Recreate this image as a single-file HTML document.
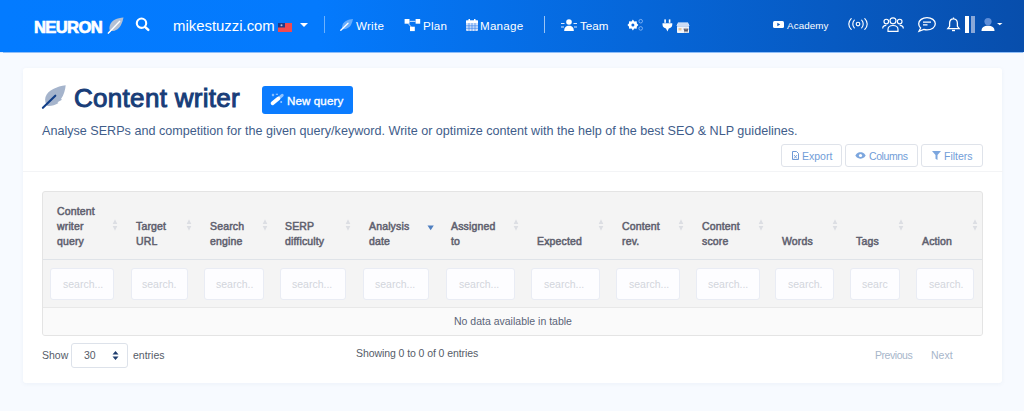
<!DOCTYPE html>
<html><head><meta charset="utf-8">
<style>
*{box-sizing:border-box;margin:0;padding:0}
html,body{width:1024px;height:411px;overflow:hidden;background:#f7faff;font-family:"Liberation Sans",sans-serif}
.a{position:absolute;white-space:nowrap;line-height:1}
svg{position:absolute;overflow:visible}
.nav{position:absolute;left:0;top:0;width:1024px;height:52px;box-shadow:0 0.8px 0.8px rgba(20,120,240,.45);background:linear-gradient(90deg,#037bff 0%,#047afd 31%,#0666d8 63%,#084eac 100%)}
.nt{color:#fff;font-size:11.6px;letter-spacing:0.25px}
.card{position:absolute;left:23px;top:68px;width:979px;height:315px;background:#fff;border-radius:3px;box-shadow:0 1px 4px rgba(30,70,140,.05)}
.sep{position:absolute;left:23px;top:171px;width:980px;height:1px;background:#f3f4f6}
.title{left:74px;top:85.3px;font-size:26px;font-weight:normal;color:#183d78;letter-spacing:0.3px;-webkit-text-stroke:1px #183d78}
.btn{position:absolute;left:262px;top:86px;width:91px;height:28px;background:#0b7cff;border-radius:3px}
.desc{left:42px;top:124.5px;font-size:12.6px;color:#3f5d8a}
.tbtn{position:absolute;top:144px;height:23px;border:1px solid #dfe3ea;border-radius:3px;background:#fff}
.tbt{color:#719dd8;font-size:10.5px;top:151px}
.tbl{position:absolute;left:42px;top:191px;width:941px;height:145.4px;border:1px solid #e4e4e4;border-radius:3px;background:#f4f4f4;overflow:hidden}
.hrow{position:absolute;left:0;top:67px;width:939px;height:1px;background:#dfe3e8}
.srow{position:absolute;left:0;top:114.6px;width:939px;height:28px;background:#fafafa;border-top:1px solid #e8e8e8}
.th{position:absolute;font-size:10.5px;font-weight:normal;color:#5e606e;line-height:15px;white-space:nowrap;letter-spacing:0.15px;-webkit-text-stroke:0.5px #5e606e}
.inp{position:absolute;top:268px;height:32px;background:#fdfdff;border:1px solid #e9ecf4;border-radius:3px}
.ph{color:#d2d5dc;font-size:10.5px;top:279px}
.sort{position:absolute;top:219px;width:6px;height:12px}
.ft{font-size:10.5px;color:#555c68}
</style></head><body>
<div class="nav"></div>

<!-- NEURON logo -->
<div class="a" style="left:34px;top:20px;font-size:16.6px;font-weight:bold;color:#fff;letter-spacing:-0.65px;-webkit-text-stroke:0.7px #fff">NEURON</div>
<svg style="left:107px;top:17px" width="17" height="17" viewBox="0 0 17 17"><path d="M16.5 0.5 C10 1 5 3 3 8 C2 11 2.5 13 3 13.5 L0.5 16.5 L1.5 16.8 L4 14 C8 14.5 12 12 14 8 C15.5 5 16 2.5 16.5 0.5Z" fill="#b3c0d4"/><path d="M1 16.5 L13 4" stroke="#fff" stroke-width="1.4"/></svg>
<!-- search -->
<svg style="left:135px;top:17px" width="15" height="14" viewBox="0 0 15 14"><circle cx="6.5" cy="6.2" r="4.7" fill="none" stroke="#fff" stroke-width="2.1"/><path d="M10 9.8 L13.3 12.9" stroke="#fff" stroke-width="2.5" stroke-linecap="round"/></svg>

<div class="a nt" style="left:173px;top:19px;font-size:14.9px;letter-spacing:0px">mikestuzzi.com</div>
<svg style="left:278px;top:23px" width="14" height="9" viewBox="0 0 14 9"><rect width="14" height="9" fill="#f04a4f"/><rect width="7" height="4.5" fill="#1e3a8a"/><circle cx="3.5" cy="2.2" r="1" fill="#fff" opacity=".7"/></svg>
<svg style="left:300px;top:22.6px" width="8" height="4" viewBox="0 0 8 4"><path d="M0 0H8L4 4Z" fill="#fff"/></svg>
<div style="position:absolute;left:323.5px;top:16px;width:1px;height:17px;background:rgba(255,255,255,.42)"></div>

<!-- Write -->
<svg style="left:340px;top:19px" width="13" height="12" viewBox="0 0 13 12"><path d="M13 0 C8 0.5 4 2 2.5 6 C1.8 8 2 9.5 2.3 10 L3 10.3 C6 10.6 9.5 8.5 11 6 C12 4 12.6 2 13 0Z" fill="rgba(220,235,255,.45)"/><path d="M0.8 11.3 L8 4.3" stroke="#fff" stroke-width="1.3" stroke-linecap="round"/></svg>
<div class="a nt" style="left:356px;top:20.3px">Write</div>
<!-- Plan sitemap -->
<svg style="left:404px;top:19px" width="17" height="13" viewBox="0 0 17 13"><rect x="0.6" y="0" width="4.9" height="4.7" fill="#fff"/><rect x="11.6" y="0" width="4.6" height="4.7" fill="#fff"/><rect x="6" y="7.7" width="4.8" height="4.4" fill="#fff"/><path d="M5.5 2.35H11.6M4.2 4.5L7.2 7.9" stroke="#cfe3ff" stroke-width="1" fill="none"/></svg>
<div class="a nt" style="left:423px;top:20.3px">Plan</div>
<!-- Manage calendar -->
<svg style="left:466px;top:19px" width="12" height="12" viewBox="0 0 12 12"><rect x="0" y="1.5" width="12" height="10.5" rx="1" fill="#cfe0fb"/><rect x="0" y="1.5" width="12" height="2.5" fill="#fff"/><rect x="2.5" y="0" width="1.5" height="2.5" fill="#fff"/><rect x="8" y="0" width="1.5" height="2.5" fill="#fff"/><path d="M0 6.8H12M0 9.3H12M3 4V12M6 4V12M9 4V12" stroke="#3d86ee" stroke-width="0.7"/></svg>
<div class="a nt" style="left:480px;top:20.3px">Manage</div>

<div style="position:absolute;left:544px;top:16px;width:1px;height:17px;background:rgba(255,255,255,.6)"></div>

<!-- Team -->
<svg style="left:561px;top:19px" width="16" height="12" viewBox="0 0 16 12"><circle cx="8" cy="3" r="2.8" fill="#fff"/><path d="M3.2 12 C3.2 8.2 5 6.8 8 6.8 C11 6.8 12.8 8.2 12.8 12Z" fill="#fff"/><path d="M0 4.5H3.5M12.5 4.5H16M0 8H3M13 8H16" stroke="#dbe8ff" stroke-width="1"/></svg>
<div class="a nt" style="left:580px;top:20.3px;letter-spacing:0px">Team</div>
<!-- gears -->
<svg style="left:627px;top:19px" width="16" height="12" viewBox="0 0 16 12"><path d="M5.9 0.6 L7.3 2.4 L9.6 2.3 L9.9 4.5 L11.4 6 L9.9 7.5 L9.6 9.7 L7.3 9.6 L5.9 11.4 L4.5 9.6 L2.2 9.7 L1.9 7.5 L0.4 6 L1.9 4.5 L2.2 2.3 L4.5 2.4Z" fill="#fff"/><circle cx="5.9" cy="6" r="3.2" fill="#fff"/><circle cx="5.9" cy="6" r="1.5" fill="#0a66dc"/><circle cx="13.7" cy="2.2" r="1.8" fill="none" stroke="rgba(170,205,255,.75)" stroke-width="0.9"/><circle cx="13.7" cy="9.4" r="1.8" fill="none" stroke="rgba(170,205,255,.75)" stroke-width="0.9"/></svg>
<!-- plug + store -->
<svg style="left:662px;top:18.5px" width="11" height="13" viewBox="0 0 11 13"><rect x="2.3" y="0.4" width="1.6" height="3.4" fill="#fff"/><rect x="6.8" y="0.4" width="1.6" height="3.4" fill="#fff"/><path d="M0.5 4.3H10.3V5.6 C10.3 8.2 8.5 9.2 6.8 9.5 L5.4 12.4 L4 9.5 C2.3 9.2 0.5 8.2 0.5 5.6Z" fill="#fff"/></svg>
<svg style="left:676px;top:22px" width="14" height="11" viewBox="0 0 14 11"><rect x="1" y="3.5" width="12" height="7.5" rx="0.8" fill="#f2f5fa"/><path d="M0.5 4 L2 0.5 H12 L13.5 4Z" fill="#ffffff"/><path d="M2 2H12M1 4H13" stroke="#7fa8e6" stroke-width="0.8"/><path d="M8 6.5 L9 9.5 L10 7 L11 9.5 L12 6.5" stroke="#5a5a6a" stroke-width="1.1" fill="none"/><rect x="2.5" y="6" width="3" height="2.5" fill="#e5c8a0"/></svg>

<!-- Academy -->
<svg style="left:773px;top:21px" width="11" height="7" viewBox="0 0 11 7"><rect width="11" height="7" rx="1.5" fill="#fff"/><path d="M4.3 1.8V5.2L7.2 3.5Z" fill="#0a56b6"/></svg>
<div class="a nt" style="left:787px;top:21px;font-size:9.8px;letter-spacing:0.1px">Academy</div>
<!-- broadcast -->
<svg style="left:848px;top:18px" width="20" height="12" viewBox="0 0 20 12"><circle cx="10" cy="6" r="1.8" fill="none" stroke="#fff" stroke-width="1.15"/><path d="M6.3 2.2 C4.3 4.2 4.3 7.8 6.3 9.8M13.7 2.2 C15.7 4.2 15.7 7.8 13.7 9.8M3.2 0.6 C0 3.8 0 8.2 3.2 11.4M16.8 0.6 C20 3.8 20 8.2 16.8 11.4" fill="none" stroke="#fff" stroke-width="1.15" stroke-linecap="round"/></svg>
<!-- users -->
<svg style="left:882px;top:17px" width="22" height="15" viewBox="0 0 22 15"><circle cx="11" cy="3.8" r="3" fill="none" stroke="#fff" stroke-width="1.15"/><circle cx="4.3" cy="4.5" r="2.3" fill="none" stroke="#fff" stroke-width="1.15"/><circle cx="17.7" cy="4.5" r="2.3" fill="none" stroke="#fff" stroke-width="1.15"/><path d="M6 14.3V12.5C6 10 8 8.5 11 8.5S16 10 16 12.5V14.3Z" fill="none" stroke="#fff" stroke-width="1.15"/><path d="M0.7 11.5C0.7 9.5 2 8.3 4.3 8.3M21.3 11.5C21.3 9.5 20 8.3 17.7 8.3" fill="none" stroke="#fff" stroke-width="1.15"/></svg>
<!-- chat -->
<svg style="left:918px;top:17px" width="18" height="15" viewBox="0 0 18 15"><path d="M9 0.7C13.5 0.7 17.3 3.2 17.3 6.8S13.5 12.9 9 12.9C7.8 12.9 6.8 12.7 5.8 12.4L1 14.3L2.6 11C1.4 9.9 0.7 8.4 0.7 6.8C0.7 3.2 4.5 0.7 9 0.7Z" fill="none" stroke="#fff" stroke-width="1.3"/><path d="M5 5.2H13M5 7.8H9.5" stroke="#fff" stroke-width="1.3"/></svg>
<!-- bell -->
<svg style="left:947px;top:17px" width="13" height="15" viewBox="0 0 13 15"><path d="M6.5 0.5V1.5M6.5 1.8C3.8 1.8 2.6 4 2.6 6.5V9.3L0.8 11.6H12.2L10.4 9.3V6.5C10.4 4 9.2 1.8 6.5 1.8Z" fill="none" stroke="#fff" stroke-width="1.3"/><path d="M5 13.5H8" stroke="#fff" stroke-width="1.4"/></svg>
<!-- bars -->
<div style="position:absolute;left:965px;top:16px;width:4px;height:17px;background:#fff"></div>
<div style="position:absolute;left:971px;top:16px;width:4px;height:17px;background:#8aa8d8"></div>
<!-- user -->
<svg style="left:981px;top:18px" width="22" height="13" viewBox="0 0 22 13"><circle cx="7" cy="3.6" r="3.6" fill="#5e8ed8"/><path d="M0.5 13C0.5 9.3 3 7.8 7 7.8S13.5 9.3 13.5 13Z" fill="#fff"/><path d="M16 5H21.5L18.75 7.3Z" fill="#fff"/></svg>

<!-- card -->
<div class="card"></div>
<div class="sep"></div>
<svg style="left:38px;top:82px" width="32" height="30" viewBox="0 0 32 30"><path d="M27.7 3.3C19 4.5 10 8 7.5 15C6.5 18 7.5 22 9.5 24C13 24.5 17 23 20.5 21L19.5 20.2L24 17.8L23 17C26 13 27.2 8 27.7 3.3Z" fill="#a5b4cc"/><path d="M4.9 25.8L17.3 13.7" stroke="#123f88" stroke-width="2.1" stroke-linecap="round"/></svg>
<div class="a title">Content writer</div>
<div class="btn"></div>
<svg style="left:266px;top:88px" width="24" height="24" viewBox="0 0 24 24"><path d="M6.6 15.2L12.4 10.6" stroke="#fff" stroke-width="3.8" stroke-linecap="round"/><path d="M13.2 9.8L16.2 7.3" stroke="rgba(255,255,255,.55)" stroke-width="3" stroke-linecap="round"/><path d="M7 5.8V8.2M5.8 7H8.2M9.8 6.2H12" stroke="rgba(220,235,255,.75)" stroke-width="1.1"/><circle cx="15.2" cy="14" r="1" fill="rgba(220,235,255,.7)"/></svg>
<div class="a" style="left:287px;top:94.6px;font-size:11.6px;color:#fff;font-weight:normal;letter-spacing:0.1px;-webkit-text-stroke:0.35px #fff">New query</div>
<div class="a desc">Analyse SERPs and competition for the given query/keyword. Write or optimize content with the help of the best SEO &amp; NLP guidelines.</div>

<div class="tbtn" style="left:781px;width:61px"></div>
<div class="tbtn" style="left:845px;width:73px"></div>
<div class="tbtn" style="left:921px;width:62px"></div>
<svg style="left:792px;top:151px" width="7" height="9" viewBox="0 0 7 9"><path d="M0.5 0.5H4.5L6.5 2.5V8.5H0.5Z" fill="none" stroke="#6f9ad6" stroke-width="1"/><path d="M2 4L5 7.5M5 4L2 7.5" stroke="#6f9ad6" stroke-width="0.9"/></svg>
<div class="a tbt" style="left:802px">Export</div>
<svg style="left:855px;top:152px" width="11" height="7" viewBox="0 0 11 7"><path d="M0.3 3.5C2 0.8 4 0.3 5.5 0.3S9 0.8 10.7 3.5C9 6.2 7 6.7 5.5 6.7S2 6.2 0.3 3.5Z" fill="#7ca6de"/><circle cx="5.5" cy="3.5" r="1.6" fill="#fff"/></svg>
<div class="a tbt" style="left:869px;letter-spacing:-0.4px">Columns</div>
<svg style="left:932px;top:151px" width="9" height="9" viewBox="0 0 9 9"><path d="M0 0H9L5.5 4V9L3.5 7.8V4Z" fill="#7ca6de"/></svg>
<div class="a tbt" style="left:944px">Filters</div>

<!-- table -->
<div class="tbl"><div class="hrow"></div><div class="srow"></div></div>

<div class="th" style="left:57px;top:204px">Content<br>writer<br>query</div>
<div class="th" style="left:136px;top:219px">Target<br>URL</div>
<div class="th" style="left:210px;top:219px">Search<br>engine</div>
<div class="th" style="left:285px;top:219px">SERP<br>difficulty</div>
<div class="th" style="left:369px;top:219px">Analysis<br>date</div>
<div class="th" style="left:451px;top:219px">Assigned<br>to</div>
<div class="th" style="left:537px;top:234px">Expected</div>
<div class="th" style="left:622px;top:219px">Content<br>rev.</div>
<div class="th" style="left:702px;top:219px">Content<br>score</div>
<div class="th" style="left:782px;top:234px">Words</div>
<div class="th" style="left:856px;top:234px">Tags</div>
<div class="th" style="left:922px;top:234px">Action</div>

<svg style="left:0;top:0;width:1024px;height:411px" width="1024" height="411">
<defs><g id="s"><path d="M3 0.3L5.3 5H0.7Z M3 11.7L5.3 7H0.7Z" fill="#dcdee3"/></g></defs>
<use href="#s" x="112" y="219"/><use href="#s" x="186" y="219"/><use href="#s" x="262" y="219"/><use href="#s" x="345" y="219"/>
<path d="M427.5 225.5H433.8L430.65 230.3Z" fill="#4f7fc0"/>
<use href="#s" x="513" y="219"/><use href="#s" x="598" y="219"/><use href="#s" x="678" y="219"/><use href="#s" x="758" y="219"/><use href="#s" x="832" y="219"/><use href="#s" x="898" y="219"/><use href="#s" x="972" y="219"/>
</svg>

<div class="inp" style="left:50px;width:64px"></div>
<div class="inp" style="left:131px;width:57px"></div>
<div class="inp" style="left:204px;width:60px"></div>
<div class="inp" style="left:280px;width:66px"></div>
<div class="inp" style="left:363px;width:66px"></div>
<div class="inp" style="left:446px;width:69px"></div>
<div class="inp" style="left:531px;width:69px"></div>
<div class="inp" style="left:616px;width:64px"></div>
<div class="inp" style="left:696px;width:64px"></div>
<div class="inp" style="left:775px;width:59px"></div>
<div class="inp" style="left:850px;width:50px"></div>
<div class="inp" style="left:916px;width:58px"></div>

<div class="a ph" style="left:63px">search...</div>
<div class="a ph" style="left:142px">search.</div>
<div class="a ph" style="left:216px">search..</div>
<div class="a ph" style="left:292px">search...</div>
<div class="a ph" style="left:375px">search...</div>
<div class="a ph" style="left:459px">search...</div>
<div class="a ph" style="left:544px">search...</div>
<div class="a ph" style="left:629px">search...</div>
<div class="a ph" style="left:708px">search...</div>
<div class="a ph" style="left:788px">search.</div>
<div class="a ph" style="left:862px">searc</div>
<div class="a ph" style="left:929px">search.</div>

<div class="a" style="left:454px;top:316px;font-size:10.5px;color:#5a6478">No data available in table</div>

<div class="a ft" style="left:42px;top:350px">Show</div>
<div style="position:absolute;left:71px;top:343px;width:57px;height:25px;border:1px solid #dde2ea;border-radius:3px;background:#fff"></div>
<div class="a ft" style="left:84px;top:350px">30</div>
<svg style="left:112px;top:351px" width="7" height="9" viewBox="0 0 7 9"><path d="M3.5 0L6.5 3.5H0.5Z M3.5 9L6.5 5.5H0.5Z" fill="#1f3d6e"/></svg>
<div class="a ft" style="left:133px;top:350px">entries</div>
<div class="a ft" style="left:356px;top:348.3px;letter-spacing:-0.08px">Showing 0 to 0 of 0 entries</div>
<div class="a" style="left:875px;top:350px;font-size:10.5px;color:#a7b6ca;letter-spacing:-0.45px">Previous</div>
<div class="a" style="left:931px;top:350px;font-size:10.5px;color:#a7b6ca">Next</div>
</body></html>
